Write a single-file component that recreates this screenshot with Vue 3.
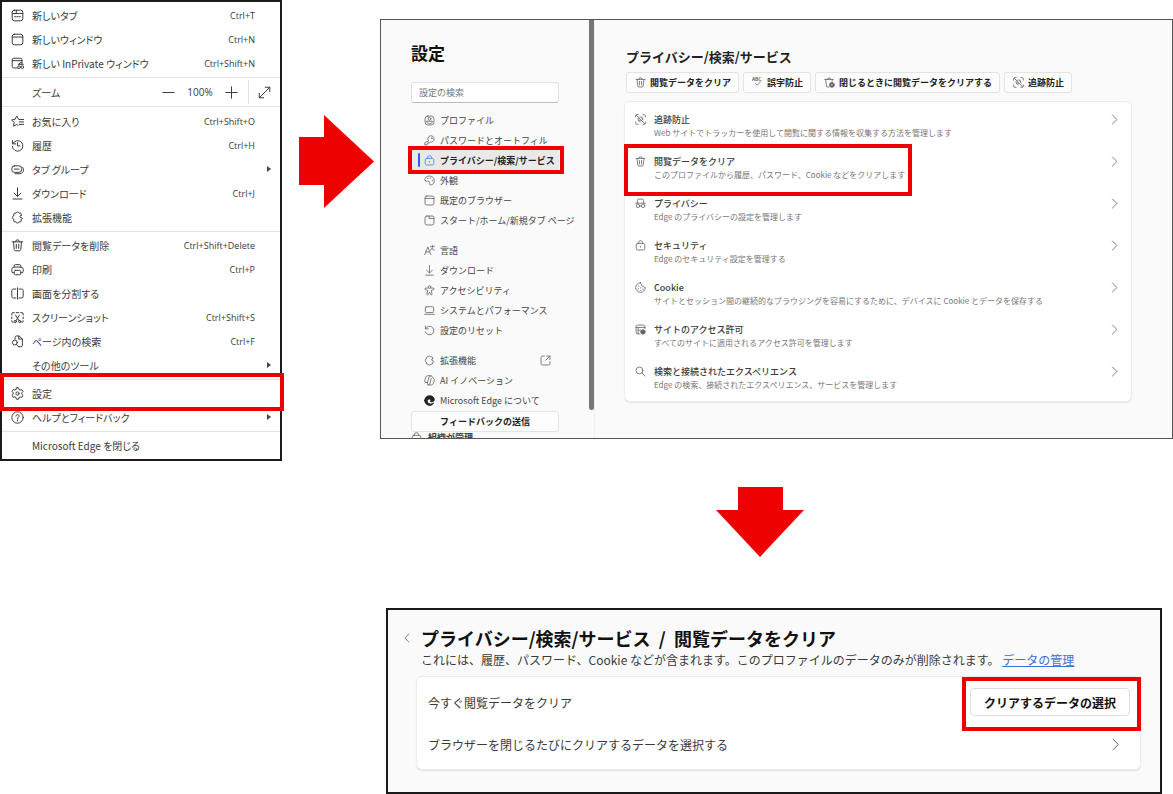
<script setup>
const menuGroups = [
  [
    { icon: 'tab', label: '新しいタブ', key: 'Ctrl+T' },
    { icon: 'window', label: '新しいウィンドウ', key: 'Ctrl+N' },
    { icon: 'inprivate', label: '新しい InPrivate ウィンドウ', key: 'Ctrl+Shift+N' },
  ],
  'zoom',
  [
    { icon: 'star', label: 'お気に入り', key: 'Ctrl+Shift+O' },
    { icon: 'history', label: '履歴', key: 'Ctrl+H' },
    { icon: 'group', label: 'タブ グループ', more: true },
    { icon: 'download', label: 'ダウンロード', key: 'Ctrl+J' },
    { icon: 'puzzle', label: '拡張機能' },
  ],
  [
    { icon: 'trash', label: '閲覧データを削除', key: 'Ctrl+Shift+Delete' },
    { icon: 'print', label: '印刷', key: 'Ctrl+P' },
    { icon: 'split', label: '画面を分割する' },
    { icon: 'shot', label: 'スクリーンショット', key: 'Ctrl+Shift+S' },
    { icon: 'find', label: 'ページ内の検索', key: 'Ctrl+F' },
    { label: 'その他のツール', more: true },
  ],
  [
    { icon: 'gear', label: '設定', marked: true },
    { icon: 'help', label: 'ヘルプとフィードバック', more: true },
  ],
  [{ label: 'Microsoft Edge を閉じる' }],
]

const navGroups = [
  [
    { icon: 'profile', label: 'プロファイル' },
    { icon: 'key', label: 'パスワードとオートフィル' },
    { icon: 'lock', label: 'プライバシー/検索/サービス', current: true },
    { icon: 'palette', label: '外観' },
    { icon: 'window', label: '既定のブラウザー' },
    { icon: 'newtab', label: 'スタート/ホーム/新規タブ ページ' },
  ],
  [
    { icon: 'language', label: '言語' },
    { icon: 'download', label: 'ダウンロード' },
    { icon: 'access', label: 'アクセシビリティ' },
    { icon: 'laptop', label: 'システムとパフォーマンス' },
    { icon: 'reset', label: '設定のリセット' },
  ],
  [
    { icon: 'puzzle', label: '拡張機能', external: true },
    { icon: 'ai', label: 'AI イノベーション' },
    { icon: 'edge', label: 'Microsoft Edge について' },
  ],
]

const chips = [
  { icon: 'trash', label: '閲覧データをクリア' },
  { icon: 'abc', label: '誤字防止' },
  { icon: 'trashgear', label: '閉じるときに閲覧データをクリアする' },
  { icon: 'tracking', label: '追跡防止' },
]

const rows = [
  { icon: 'tracking', title: '追跡防止', text: 'Web サイトでトラッカーを使用して閲覧に関する情報を収集する方法を管理します' },
  { icon: 'trash', title: '閲覧データをクリア', text: 'このプロファイルから履歴、パスワード、Cookie などをクリアします', marked: true },
  { icon: 'spy', title: 'プライバシー', text: 'Edge のプライバシーの設定を管理します' },
  { icon: 'lock', title: 'セキュリティ', text: 'Edge のセキュリティ設定を管理する' },
  { icon: 'cookie', title: 'Cookie', text: 'サイトとセッション間の継続的なブラウジングを容易にするために、デバイスに Cookie とデータを保存する' },
  { icon: 'site', title: 'サイトのアクセス許可', text: 'すべてのサイトに適用されるアクセス許可を管理します' },
  { icon: 'search', title: '検索と接続されたエクスペリエンス', text: 'Edge の検索、接続されたエクスペリエンス、サービスを管理します' },
]
</script>

<template>
  <svg class="defs" aria-hidden="true">
    <symbol id="tab" viewBox="0 0 16 16"><rect x="1.5" y="1.5" width="13" height="13" rx="2.5" /><path d="M1.5 5.5h5v-4M6.5 5.5h8M4.5 9.500h1.500M7.300 9.500h1.500M10.100 9.500h1.500" /></symbol>
    <symbol id="window" viewBox="0 0 16 16"><rect x="1.500" y="1.500" width="13" height="13" rx="2.500" /><path d="M1.500 5h13" /></symbol>
    <symbol id="newtab" viewBox="0 0 16 16"><rect x="1.500" y="1.500" width="13" height="13" rx="2.500" /><path d="M7.500 1.500V5h7" /></symbol>
    <symbol id="inprivate" viewBox="0 0 16 16"><path d="M8 13.500H3.500a2 2 0 0 1-2-2v-8a2 2 0 0 1 2-2h8a2 2 0 0 1 2 2V7M1.500 4.500h12M9 9h6M10 9l1-2h2l1 2" /><circle cx="10" cy="12.500" r="1.700" /><circle cx="14" cy="12.500" r="1.700" /></symbol>
    <symbol id="star" viewBox="0 0 16 16"><path d="M9.500 5.300 7 1.200 5 5.300.8 6l3.100 3.200-.8 4.600L7 11.700l1.500.8M10.500 5.500h5M10 8.500h5.500M10 11.500h5.500" /></symbol>
    <symbol id="history" viewBox="0 0 16 16"><path d="M1.800 2v4h4M2.200 5.700A6.500 6.500 0 1 1 1.600 9M8 4.500v4h3" /></symbol>
    <symbol id="group" viewBox="0 0 16 16"><rect x="1" y="3.500" width="12" height="8" rx="3" /><path d="M4 7.500h6M14 5c1 .8 1.400 2 1.300 3.500-.1 3-1.800 4.500-4.500 4.700H5" /></symbol>
    <symbol id="download" viewBox="0 0 16 16"><path d="M8 1v10.500M3.800 7.500 8 11.700l4.200-4.200M2.500 14.800h11" /></symbol>
    <symbol id="puzzle" viewBox="0 0 16 16"><path d="M12.500 5.500V3.700a1 1 0 0 0-1-1H10C9.800.8 6.200.8 6 2.700H4.500a1 1 0 0 0-1 1v2.100c-2.400.2-2.400 4.200 0 4.400v2.100a1 1 0 0 0 1 1H6c.2 2 3.800 2 4 0h1.500a1 1 0 0 0 1-1v-2c2-.2 2-2-.1-2.200-2-.2-2-2.200.1-2.600Z" /></symbol>
    <symbol id="trash" viewBox="0 0 16 16"><path d="M1.500 3.500h13M5.500 3.500a2.500 2.500 0 0 1 5 0M3 3.500l1 9.500a1.800 1.800 0 0 0 1.800 1.500h4.400A1.800 1.800 0 0 0 12 13l1-9.500M6.500 6.500v5M9.500 6.500v5" /></symbol>
    <symbol id="print" viewBox="0 0 16 16"><path d="M4 12H2.500A1.500 1.500 0 0 1 1 10.500V8a3 3 0 0 1 3-3h8a3 3 0 0 1 3 3v2.500a1.500 1.500 0 0 1-1.500 1.500H12M4 5V3.500A1.500 1.500 0 0 1 5.500 2h5A1.500 1.500 0 0 1 12 3.500V5" /><rect x="4" y="9" width="8" height="5.500" rx="1.500" /></symbol>
    <symbol id="split" viewBox="0 0 16 16"><path d="M6 2.500H3a2 2 0 0 0-2 2v7a2 2 0 0 0 2 2h3M10 2.500h3a2 2 0 0 1 2 2v7a2 2 0 0 1-2 2h-3M8 1v14" /></symbol>
    <symbol id="shot" viewBox="0 0 16 16"><path d="M1 5V3.500A1.500 1.500 0 0 1 2.500 2H4M6.500 2h3M12 2h1.500A1.500 1.500 0 0 1 15 3.500V5M1 7.500v2M15 7.500v2M1 12v.5A1.500 1.500 0 0 0 2.500 14M15 12v.5a1.500 1.500 0 0 1-1.500 1.500M5.500 5l4.500 7M10.500 5 6 12" /><circle cx="5.200" cy="13" r="1.400" /><circle cx="10.800" cy="13" r="1.400" /></symbol>
    <symbol id="find" viewBox="0 0 16 16"><path d="M5 5V3a1.800 1.800 0 0 1 1.800-1.800H10L14 5v7.700a1.800 1.800 0 0 1-1.800 1.800H9.500M9.500 1.500V5H14M6.500 11.500l3 3" /><circle cx="4.700" cy="9.300" r="3" /></symbol>
    <symbol id="gear" viewBox="0 0 16 16"><path d="M6.700 1h2.600l.5 2 1.500.8 2-.6 1.500 2.400L13.400 7v2l1.400 1.400-1.500 2.400-2-.6-1.500.8-.5 2H6.700l-.5-2-1.500-.8-2 .6-1.500-2.400L2.600 9V7L1.200 5.600l1.500-2.400 2 .6L6.200 3Z" /><circle cx="8" cy="8" r="2" /></symbol>
    <symbol id="help" viewBox="0 0 16 16"><circle cx="8" cy="8" r="7" /><path d="M6 6.300C6 3.700 10 3.800 10 6.200 10 7.700 8 7.800 8 9.500M8 11v1.200" /></symbol>
    <symbol id="expand" viewBox="0 0 16 16"><path d="M9 1.500h5.500V7M14.500 1.500l-13 13M1.500 9v5.500H7" /></symbol>
    <symbol id="minus" viewBox="0 0 16 16"><path d="M1 8h14" /></symbol>
    <symbol id="plus" viewBox="0 0 16 16"><path d="M1 8h14M8 1v14" /></symbol>
    <symbol id="profile" viewBox="0 0 16 16"><rect x="1.500" y="1.500" width="13" height="13" rx="4" /><circle cx="8" cy="5.500" r="2" /><path d="M4 9h8v1.500c0 2.500-8 2.500-8 0Z" /></symbol>
    <symbol id="key" viewBox="0 0 16 16"><path d="M6.300 8.300A4.600 4.600 0 1 1 9 10.200L7.800 11.300H6v1.500H4.500v1.700H1.200v-2.900Z" /><circle cx="11.300" cy="4.700" r=".6" /></symbol>
    <symbol id="lock" viewBox="0 0 16 16"><rect x="1.800" y="5" width="12.400" height="9.500" rx="2" /><path d="M5 5V4a3 3 0 0 1 6 0v1M8 9.200v1.200" /></symbol>
    <symbol id="palette" viewBox="0 0 16 16"><path d="M2 8.500C-.5 6 2.500 1.500 8 1.500c4 0 7 3 7 7 0 3.500-2.500 6-5 6-3.500 0-1-4-3-5.500C5.500 8 4 10.500 2 8.500ZM5 5h1M9 4.500h1M12 8h.5" /></symbol>
    <symbol id="language" viewBox="0 0 16 16"><path d="m1 14 4.500-11L10 14M2.800 10h5.500M9.500 2H15M12.500 1v1c0 3-1 4.500-3 5.500M11 4.500c1 2 2 2.500 4 3" /></symbol>
    <symbol id="access" viewBox="0 0 16 16"><circle cx="8" cy="2.800" r="1.900" /><path d="M6 4.500H2.500a1.100 1.100 0 0 0 0 2.400L5.500 8 4.300 13a1 1 0 0 0 2 .7L8 10.500l1.700 3.200a1 1 0 0 0 2-.7L10.500 8l3-1.100a1.100 1.100 0 0 0 0-2.400H10" /></symbol>
    <symbol id="laptop" viewBox="0 0 16 16"><rect x="2" y="2.500" width="12" height="8.500" rx="1.500" /><path d="M1 13.500h14" /></symbol>
    <symbol id="reset" viewBox="0 0 16 16"><path d="M2 1.500v4h4M2.500 5A6.300 6.300 0 1 1 2 10" /></symbol>
    <symbol id="ai" viewBox="0 0 16 16"><path d="M5 11H3c-3 0-2-2.500-1-6s2-4 4-4h4c2 0 2 3 3 3.500 3 .5 2 3.500 1 6.500s-2 3.500-4 3.500H6.500c-2 0-1-1.500-1.500-3.500ZM5 11 7 4c.5-2 1-2.500 3-2.500M10.500 5 8.800 11.500c-.5 2-1 3-2.800 3" /></symbol>
    <symbol id="edge" viewBox="0 0 16 16"><path class="solid" d="M1 8C1 4 4 1 8 1c5 0 7 3 7 6 0 2-2 3-4 3-1 0-2-.4-1.500-1.200C10.500 7 9 5.800 7.500 5.800 4 5.800 3.500 12 9 13c2 .3 4-.6 5-1.500C12 15 9 15.500 7 15c-3.500-.5-6-3.500-6-7Z" /></symbol>
    <symbol id="external" viewBox="0 0 16 16"><path d="M6.500 1.500h-3a2 2 0 0 0-2 2v9a2 2 0 0 0 2 2h9a2 2 0 0 0 2-2v-3M9.500 1.500h5v5M14.500 1.500 8.500 7.500" /></symbol>
    <symbol id="trashgear" viewBox="0 0 16 16"><path d="M1 3.500h12.500M5 3.500a2.200 2.200 0 0 1 4.500 0M2.500 3.500l1 9.500a1.500 1.500 0 0 0 1.500 1.500h2M12 3.500 11.800 6" /><circle class="solid" cx="11.500" cy="11.500" r="3.500" /><circle class="hole" cx="11.500" cy="11.500" r="1" /></symbol>
    <symbol id="tracking" viewBox="0 0 16 16"><path d="M1 4.500V2.500A1.500 1.500 0 0 1 2.500 1h2M11.500 1h2A1.500 1.500 0 0 1 15 2.500v2M1 11.500v2A1.500 1.500 0 0 0 2.500 15h2M11.500 15h2a1.500 1.500 0 0 0 1.500-1.500v-2M2 2l12 12M7 4.500c2-.5 4 .5 4.500 2.500M4.500 6.500c-.3 2 .5 4.500 3 5M9.500 4.500l2 4M5 9h3.500" /></symbol>
    <symbol id="spy" viewBox="0 0 16 16"><path d="M1 7.500h14M3.500 7.500V4A2.500 2.500 0 0 1 6 1.500h4A2.500 2.500 0 0 1 12.500 4v3.500M6.500 11.500h3" /><circle cx="4.200" cy="11.500" r="2.500" /><circle cx="11.800" cy="11.500" r="2.500" /></symbol>
    <symbol id="cookie" viewBox="0 0 16 16"><path d="M8 1a7 7 0 1 0 7 7c-1.500.5-2.800-.3-2.800-1.800C10 6.500 9 5 9.800 3.500 8.500 3.500 7.800 2.300 8 1ZM5 6h.6M4.500 10h.6M8 8.500h.6M8 12h.6M11.300 10.500h.6" /></symbol>
    <symbol id="site" viewBox="0 0 16 16"><path d="M1.500 5h13M6.500 14.500h-2a3 3 0 0 1-3-3V4a2.500 2.500 0 0 1 2.500-2.500h8A2.500 2.500 0 0 1 14.500 4v3M4.500 5v9M4.500 9H8" /><circle class="solid" cx="11.500" cy="11.500" r="3.300" /></symbol>
    <symbol id="search" viewBox="0 0 16 16"><circle cx="6.500" cy="6.500" r="5" /><path d="m10.200 10.200 4.500 4.500" /></symbol>
    <symbol id="next" viewBox="0 0 16 16"><path d="m5 1.500 6.500 6.500L5 14.500" /></symbol>
    <symbol id="back" viewBox="0 0 16 16"><path d="M11 1.500 4.500 8l6.500 6.500" /></symbol>
  </svg>

  <div class="page">
    <nav class="menu" aria-label="メニュー">
      <template v-for="(group, g) in menuGroups" :key="g">
        <hr v-if="g" class="rule" :class="{ slim: g > 2 }" />
        <div v-if="group === 'zoom'" class="zoom">
          <span class="zoom-label">ズーム</span>
          <button class="zoom-btn" aria-label="縮小"><svg class="ico"><use href="#minus" /></svg></button>
          <span class="zoom-value">100%</span>
          <button class="zoom-btn" aria-label="拡大"><svg class="ico"><use href="#plus" /></svg></button>
          <button class="full" aria-label="全画面"><svg class="ico"><use href="#expand" /></svg></button>
        </div>
        <template v-else>
          <button v-for="item in group" :key="item.label" class="item">
            <svg class="ico"><use v-if="item.icon" :href="'#' + item.icon" /></svg>
            <span class="name">{{ item.label }}</span>
            <span v-if="item.key" class="shortcut">{{ item.key }}</span>
            <span v-if="item.more" class="more"></span>
            <span v-if="item.marked" class="mark mark-menu"></span>
          </button>
        </template>
      </template>
    </nav>

    <svg class="arrow-right" viewBox="0 0 75 93"><path d="M0 22h25V0l50 46.500L25 93V70H0Z" /></svg>

    <div class="column">
      <section class="settings">
        <aside class="side">
          <h1>設定</h1>
          <input class="field" type="search" placeholder="設定の検索" aria-label="設定の検索" />
          <nav class="nav" aria-label="設定">
            <div v-for="(group, g) in navGroups" :key="g">
              <a v-for="item in group" :key="item.label" href="#" class="link" :class="{ current: item.current }">
                <svg class="ico" :class="{ dark: item.icon === 'edge' }"><use :href="'#' + item.icon" /></svg>
                <span>{{ item.label }}</span>
                <svg v-if="item.external" class="ico external"><use href="#external" /></svg>
                <span v-if="item.current" class="mark mark-nav"></span>
              </a>
            </div>
          </nav>
          <button class="feedback">フィードバックの送信</button>
          <div class="managed"><svg class="ico"><use href="#lock" /></svg><span>組織が管理</span></div>
        </aside>
        <div class="track"><div class="thumb"></div></div>
        <main class="main">
          <h2>プライバシー/検索/サービス</h2>
          <div class="chips">
            <button v-for="chip in chips" :key="chip.label" class="chip">
              <svg v-if="chip.icon === 'abc'" class="ico" viewBox="0 0 16 16"><text class="abc" x="0" y="6">ABC</text><path d="m5 9.500 2.500 2.500 5-5" /></svg>
              <svg v-else class="ico"><use :href="'#' + chip.icon" /></svg>{{ chip.label }}
            </button>
          </div>
          <div class="card">
            <button v-for="row in rows" :key="row.title" class="row">
              <svg class="ico"><use :href="'#' + row.icon" /></svg>
              <span class="copy"><span class="title">{{ row.title }}</span><span class="text">{{ row.text }}</span></span>
              <svg class="ico go"><use href="#next" /></svg>
              <span v-if="row.marked" class="mark mark-row"></span>
            </button>
          </div>
        </main>
      </section>

      <svg class="arrow-down" viewBox="0 0 88 70"><path d="M22 0h45v23h21L44 70 0 23h22Z" /></svg>

      <section class="clear">
        <button class="back" aria-label="戻る"><svg class="ico"><use href="#back" /></svg></button>
        <div class="heading">
          <h2>プライバシー/検索/サービス&nbsp; / &nbsp;閲覧データをクリア</h2>
          <p>これには、履歴、パスワード、Cookie などが含まれます。このプロファイルのデータのみが削除されます。 <a href="#">データの管理</a></p>
        </div>
        <div class="clear-card">
          <div class="line">
            <span>今すぐ閲覧データをクリア</span>
            <span class="choice"><button class="choose">クリアするデータの選択</button><span class="mark mark-choose"></span></span>
          </div>
          <button class="line line-link">
            <span>ブラウザーを閉じるたびにクリアするデータを選択する</span>
            <svg class="ico"><use href="#next" /></svg>
          </button>
        </div>
      </section>
    </div>
  </div>
</template>

<style>
body {
  background: #fff;
}
</style>

<style scoped>
.defs {
  position: absolute;
  width: 0;
  height: 0;
}
.page {
  display: flex;
  align-items: flex-start;
  font-family: "Noto Sans CJK JP", "Noto Sans", sans-serif;
  color: #3a3a3a;
  white-space: nowrap;
}
.page *,
.page {
  box-sizing: border-box;
}
button {
  font: inherit;
  color: inherit;
  background: none;
  border: 0;
  margin: 0;
  padding: 0;
  text-align: left;
  white-space: nowrap;
}
a {
  color: inherit;
  text-decoration: none;
}
h1,
h2,
p {
  margin: 0;
}
.ico {
  flex: none;
  width: 13px;
  height: 13px;
  fill: none;
  stroke: currentColor;
  stroke-width: 1.2;
  stroke-linecap: round;
  stroke-linejoin: round;
}
.solid {
  fill: currentColor;
}
.hole {
  fill: #fff;
  stroke: none;
}
.abc {
  font-size: 7px;
  font-weight: 700;
  fill: currentColor;
  stroke: none;
}
.mark {
  position: absolute;
  border: 4px solid #ee0000;
  pointer-events: none;
  z-index: 1;
}

/* Browser menu */
.menu {
  flex: none;
  width: 282px;
  padding: 1px 0 2px;
  border: 2px solid #1c1a1d;
  background: #fff;
  font-size: 10px;
  font-feature-settings: "palt";
}
.rule {
  height: 1px;
  margin: 2px 0;
  border: 0;
  background: #e4e4e4;
}
.slim {
  margin-bottom: 1px;
}
.item {
  position: relative;
  display: flex;
  align-items: center;
  width: 100%;
  height: 24px;
  padding: 0 25px 0 9px;
}
.name {
  flex: 1;
  margin-left: 8px;
}
.shortcut {
  font-family: "Open Sans", "Noto Sans", sans-serif;
  font-size: 9px;
}
.more {
  position: absolute;
  right: 9px;
  border: 3px solid transparent;
  border-left: 4px solid #444;
  border-right: 0;
}
.mark-menu {
  inset: -8px -4px -6px -2px;
}
.zoom {
  display: flex;
  align-items: center;
  height: 24px;
  padding-left: 30px;
}
.zoom-label {
  flex: 1;
}
.zoom-btn {
  display: flex;
}
.zoom-value {
  width: 50px;
  text-align: center;
  font-family: "Open Sans", "Noto Sans", sans-serif;
}
.full {
  display: flex;
  align-items: center;
  height: 24px;
  margin-left: 10px;
  padding: 0 9px;
  border-left: 1px solid #e4e4e4;
}

/* Arrows between the steps */
.arrow-right {
  flex: none;
  width: 75px;
  margin: 115px 6px 0 17px;
  fill: #ee0000;
}
.arrow-down {
  width: 88px;
  margin: 48px 0 51px 336px;
  fill: #ee0000;
  display: block;
}
.column {
  flex: 1;
  min-width: 0;
}

/* Settings window */
.settings {
  display: flex;
  margin-top: 19px;
  border: 1px solid #555;
  background: #fafafa;
  font-size: 9px;
}
.settings .ico {
  width: 11px;
  height: 11px;
  color: #666;
}
.settings .dark {
  color: #222;
}
.side {
  flex: none;
  width: 208px;
  padding: 23px 0 0 30px;
}
h1 {
  font-size: 17px;
  line-height: 20px;
  color: #111;
}
.field {
  display: block;
  width: 148px;
  height: 21px;
  margin: 19px 0 7px;
  padding: 0 7px;
  border: 1px solid #e2e2e2;
  border-bottom-color: #bbb;
  border-radius: 3px;
  background: #fff;
  font: inherit;
}
.field::placeholder {
  color: #777;
}
.nav {
  display: grid;
  gap: 10px;
}
.link {
  position: relative;
  display: flex;
  align-items: center;
  gap: 5px;
  width: 148px;
  height: 20px;
  padding-left: 13px;
  color: #444;
}
.external {
  margin-left: auto;
  margin-right: 8px;
}
.current {
  background: #e9e9e9;
  color: #222;
  font-weight: 700;
}
.current::before {
  content: "";
  position: absolute;
  left: 7px;
  width: 2px;
  height: 14px;
  border-radius: 1px;
  background: #2b62e3;
}
.settings .current .ico {
  color: #4b83f5;
}
.mark-nav {
  inset: -4px -5px -4px -3px;
}
.feedback {
  width: 148px;
  height: 21px;
  margin-top: 1px;
  border: 1px solid #e4e4e4;
  border-radius: 3px;
  background: #fdfdfd;
  color: #222;
  font-weight: 700;
  text-align: center;
  display: block;
}
.managed {
  display: flex;
  gap: 6px;
  height: 6px;
  overflow: hidden;
  font-weight: 700;
  line-height: 11px;
}
.track {
  flex: none;
  width: 5px;
}
.thumb {
  height: 390px;
  border-radius: 0 0 3px 3px;
  background: #777;
}
.main {
  flex: 1;
  min-width: 0;
  padding: 27px 40px 36px 29px;
  border-left: 1px solid #f0f0f0;
}
.main h2 {
  margin-left: 2px;
  font-size: 13px;
  line-height: 20px;
  color: #222;
}
.chips {
  display: flex;
  gap: 4px;
  margin: 5px 0 8px 2px;
}
.chip {
  display: flex;
  align-items: center;
  gap: 4px;
  height: 21px;
  padding: 0 7px 0 8px;
  border: 1px solid #e4e4e4;
  border-radius: 3px;
  background: #fcfcfc;
  color: #222;
  font-weight: 700;
}
.card,
.clear-card {
  border: 1px solid #ececec;
  border-radius: 6px;
  background: #fff;
}
.card {
  padding: 3px 0 2px;
  box-shadow: 0 1px 1px #e6e6e6;
}
.row {
  position: relative;
  display: flex;
  align-items: flex-start;
  width: 100%;
  height: 42px;
  padding: 8px 11px 0 10px;
}
.row .ico {
  margin-top: 1px;
}
.copy {
  flex: 1;
  min-width: 0;
  margin-left: 8px;
}
.title,
.text {
  display: block;
}
.title {
  line-height: 14px;
  font-weight: 500;
}
.text {
  font-size: 8px;
  line-height: 12px;
  color: #777;
}
.mark-row {
  width: 288px;
  inset: -3px auto -7px -1px;
}

/* Clear browsing data window */
.clear {
  display: grid;
  grid-template-columns: 19px 1fr;
  margin: 0 11px 0 6px;
  padding: 16px 19px 22px 14px;
  border: 2px solid #1a1a1a;
  background: #fafafa;
  font-size: 12px;
}
.back {
  display: flex;
  align-items: center;
  height: 24px;
  color: #555;
}
.back .ico {
  width: 10px;
  height: 10px;
}
.heading h2 {
  font-size: 18px;
  line-height: 24px;
  color: #111;
}
.heading p {
  line-height: 20px;
}
.heading a {
  color: #3c6fe0;
  text-decoration: underline;
}
.clear-card {
  grid-column: 1 / -1;
  margin: 6px 0 0 14px;
  padding: 4px 10px 4px 11px;
  box-shadow: 0 1px 1px #e0e0e0;
}
.line {
  display: flex;
  align-items: center;
  justify-content: space-between;
  width: 100%;
  height: 42px;
}
.line-link .ico {
  margin-right: 8px;
  color: #555;
}
.choice {
  position: relative;
}
.choose {
  display: block;
  height: 28px;
  padding: 0 13px;
  border: 1px solid #dedede;
  border-radius: 4px;
  background: #fff;
  color: #111;
  font-weight: 700;
}
.mark-choose {
  inset: -11px -11px -15px -8px;
}
</style>
